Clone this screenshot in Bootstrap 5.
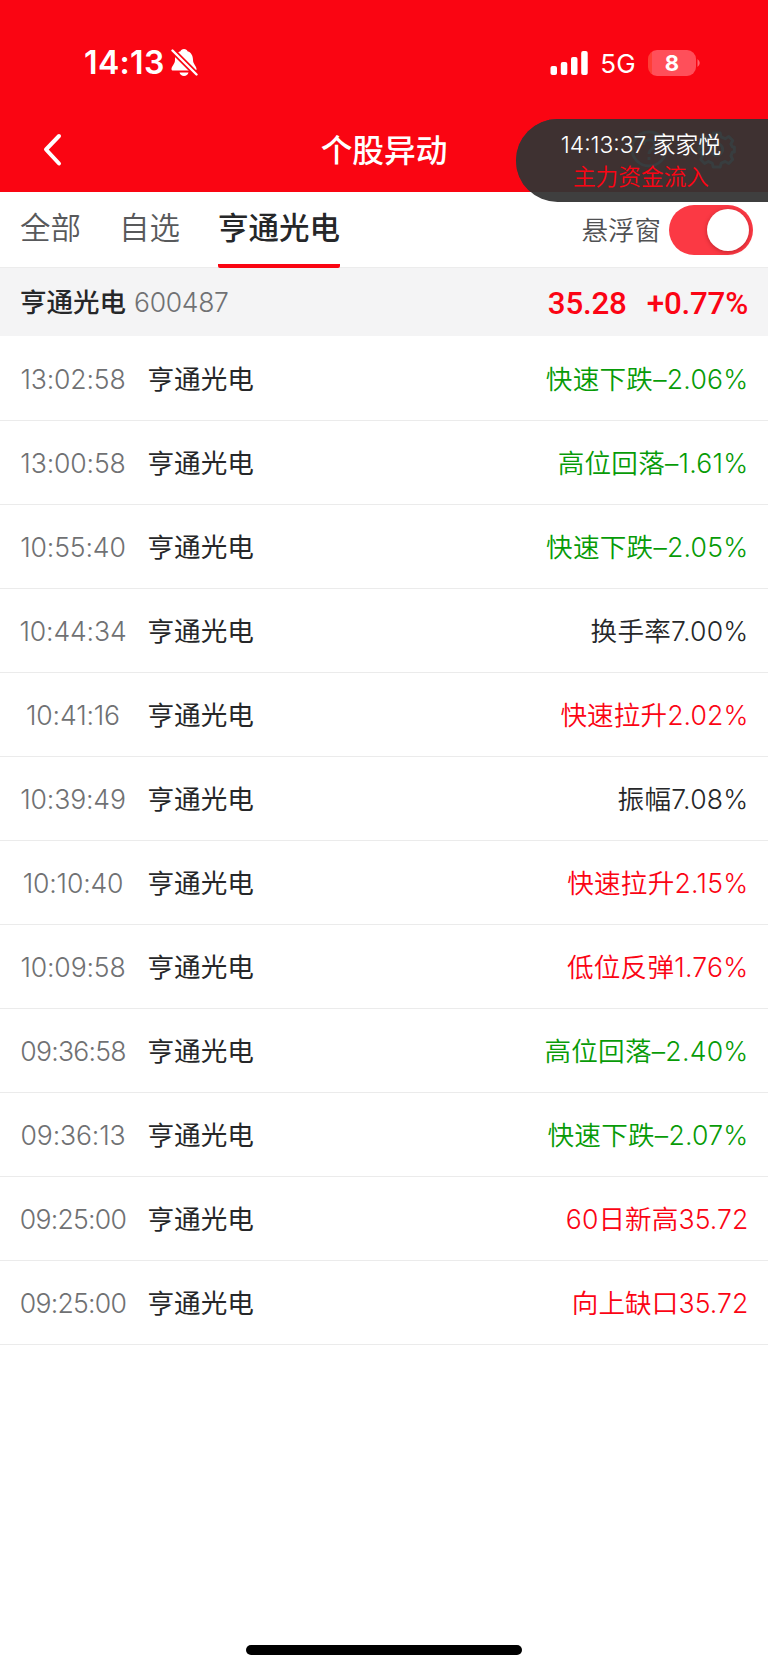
<!DOCTYPE html>
<html lang="zh-CN">
<head>
<meta charset="utf-8">
<meta name="viewport" content="width=device-width, initial-scale=1">
<title>个股异动</title>
<link rel="stylesheet" href="https://cdn.jsdelivr.net/npm/bootstrap@5.3.0/dist/css/bootstrap.min.css">
<style>
:root{--brand:#fa0512;--up:#fb0414;--down:#079b07;--ink:#262729;--dim:#707173}
body{font-family:Inter,"Noto Sans CJK SC",sans-serif;color:var(--ink);background:#fff;min-height:1670px;line-height:1}
svg{display:block}
.app-head{background:var(--brand);height:192px}
.status{height:125px;padding:0 68px 0 84px}
.clock{font-size:32px;font-weight:600;letter-spacing:.35px}
.bell{margin-left:6px}
.net{font-size:26px;margin-left:12px;letter-spacing:.3px;padding-top:2px}
.battery{width:48px;height:26px;margin-left:12px;border-radius:9px;background:linear-gradient(90deg,#ff3e36 4px,#ff4f5a 4px);font-size:22px;font-weight:700}
.title{font-size:31.7px;font-weight:500}
.bar{height:51px}
.back{left:39px;top:6px}
.float-tip{left:516px;right:0;top:119px;height:83px;border-radius:44px 0 0 44px;background:#3f3f3f;overflow:hidden;z-index:5}
.float-tip::before{content:"";position:absolute;inset:0 0 10px 0;background:#3e3131}
.tip-icons{left:111px;top:10px}
.tip-text{width:250px}
.tip-text .l1{font-size:22.8px;font-weight:350;color:#fff;padding-top:14px;line-height:24px}
.tip-text .l2{font-size:22.7px;font-weight:350;color:var(--up);line-height:24px;margin-top:8px}
.tabs-row{height:76px;border-bottom:1px solid #ececec;padding:0 15px 0 20px}
.tab-item{font-size:30.5px;height:76px;line-height:72px;color:#58595b;font-weight:350}
.t2{margin-left:38px}
.tab-item.on{margin-left:38px;color:var(--ink);font-weight:500;border-bottom:4px solid var(--brand);border-radius:2px;height:76px}
.sw-label{font-size:26.5px;font-weight:350;color:#505153;margin-right:8px;padding-top:2px}
.form-switch .form-check-input.sw{width:84px;height:50px;margin:0;border:0;border-radius:25px;background-color:#fb3944;background-image:none;position:relative;box-shadow:none;float:none}
.sw::after{content:"";position:absolute;width:42px;height:42px;border-radius:50%;background:#fff;right:4px;top:4px;box-shadow:0 1px 4px rgba(80,0,0,.35)}
.stock{height:68px;background:#f4f4f5;padding:1px 20px 0}
.stock .nm{font-size:26.5px;font-weight:500}
.stock .code{font-size:26.5px;font-weight:350;color:var(--dim);letter-spacing:-.3px}
.price{font-family:Roboto,sans-serif;font-weight:500;font-size:31.3px;letter-spacing:-.2px;color:var(--up);padding-top:3px}
.chg{margin-left:20px}
.ev{height:84px;border-bottom:1px solid #ebebeb;padding:2px 20px 0;color:var(--ink);font-size:26.6px}
.ev:first-child{height:85px;padding-top:3px}
.tm{width:106px;color:var(--dim);font-weight:350;white-space:nowrap;letter-spacing:-.15px}
.tm.wide{letter-spacing:-.75px}
.ev-name{margin-left:21.500px}
.val{font-weight:350;letter-spacing:.1px;margin-right:-.5px}
.pct{letter-spacing:.25px}
.up{color:var(--up)}.down{color:var(--down)}
.home-bar{left:246px;bottom:15px;width:276px;height:10px;border-radius:5px;background:#000}
</style>
</head>
<body class="position-relative">
<header class="app-head text-white position-relative">
  <div class="status d-flex align-items-center">
    <span class="clock">14:13</span>
    <svg class="bell" width="27" height="29" viewBox="0 0 27 29"><path d="M13 1c-2 0-3 1-3.500 2.200C5.500 4.500 4 8 4 12c0 4-3.500 6-3.500 9 0 1 .6 1.500 1.500 1.500h22c1 0 1.500-.5 1.500-1.500 0-3-3.500-5-3.500-9 0-4-1.500-7.500-5.500-8.800C16 2 15 1 13 1zM8.500 24.500c.5 2 2.300 3.500 4.500 3.500s4-1.500 4.500-3.500z" fill="#fff"/><path d="M1.500 2.500l24 24" stroke="#fa0512" stroke-width="5.600"/><path d="M1.500 2.500l24 24" stroke="#fff" stroke-width="2.400" stroke-linecap="round"/></svg>
    <svg class="ms-auto" width="38" height="24" viewBox="0 0 38 24" fill="#fff"><rect x="0.500" y="15" width="6.500" height="9" rx="2"/><rect x="10.800" y="11" width="6.500" height="13" rx="2"/><rect x="21" y="6" width="6.500" height="18" rx="2"/><rect x="31.200" y="0" width="6.500" height="24" rx="2"/></svg>
    <span class="net">5G</span>
    <span class="battery d-flex align-items-center justify-content-center">8</span>
    <svg width="4" height="8" viewBox="0 0 4 8"><path d="M1.500 0v8Q6 4 1.500 0z" fill="#ff6670"/></svg>
  </div>
  <div class="bar d-flex justify-content-center align-items-center position-relative">
    <svg class="back position-absolute" width="24" height="36" viewBox="0 0 24 36" fill="none" stroke="#fff" stroke-width="4" stroke-linecap="round" stroke-linejoin="round"><path d="M20 5L7 18.500l13 14"/></svg>
    <span class="title">个股异动</span>
  </div>
  <div class="float-tip position-absolute">
    <svg class="tip-icons position-absolute" width="110" height="42" viewBox="0 0 110 42" fill="none" stroke="#383d3f" stroke-width="3"><circle cx="22" cy="20" r="17"/><path d="M16.500 16c0-7 11-7 11 0 0 4-5.500 4-5.500 9M22 28v3"/><g transform="translate(89.700 20.500)"><path stroke-linejoin="round" d="M-3.500-16.500h7l1 4 4 1.700 3.600-2.200 3.900 4-1.800 3.500 1.500 3h2v5h-2l-1.500 4 1.800 3.500-3.900 4-3.600-2-4 1.600-1 4h-7l-1-4-4-1.600-3.600 2-3.900-4 1.800-3.500-1.500-4h-2v-5h2l1.500-3-1.800-3.500 3.900-4 3.600 2.200 4-1.700z"/><circle r="6"/></g></svg>
    <div class="tip-text position-relative text-center">
      <div class="l1">14:13:37 家家悦</div>
      <div class="l2">主力资金流入</div>
    </div>
  </div>
</header>
<nav class="tabs-row d-flex align-items-center">
  <span class="tab-item">全部</span><span class="tab-item t2">自选</span><span class="tab-item on">亨通光电</span>
  <span class="sw-label ms-auto">悬浮窗</span>
  <span class="form-check form-switch p-0 m-0 d-flex"><input class="form-check-input sw" type="checkbox" role="switch" checked aria-label="悬浮窗"></span>
</nav>
<section class="stock d-flex align-items-center">
  <span class="nm">亨通光电</span><span class="code ms-2">600487</span>
  <span class="price ms-auto">35.28</span><span class="price chg">+0.77%</span>
</section>
<main class="d-flex flex-column">
  <div class="ev d-flex align-items-center"><span class="tm d-flex justify-content-center">13:02:58</span><span class="ev-name">亨通光电</span><span class="val pct ms-auto down">快速下跌–2.06%</span></div>
  <div class="ev d-flex align-items-center"><span class="tm d-flex justify-content-center">13:00:58</span><span class="ev-name">亨通光电</span><span class="val pct ms-auto down">高位回落–1.61%</span></div>
  <div class="ev d-flex align-items-center"><span class="tm d-flex justify-content-center">10:55:40</span><span class="ev-name">亨通光电</span><span class="val pct ms-auto down">快速下跌–2.05%</span></div>
  <div class="ev d-flex align-items-center"><span class="tm d-flex justify-content-center">10:44:34</span><span class="ev-name">亨通光电</span><span class="val pct ms-auto">换手率7.00%</span></div>
  <div class="ev d-flex align-items-center"><span class="tm d-flex justify-content-center">10:41:16</span><span class="ev-name">亨通光电</span><span class="val ms-auto up">快速拉升2.02%</span></div>
  <div class="ev d-flex align-items-center"><span class="tm d-flex justify-content-center">10:39:49</span><span class="ev-name">亨通光电</span><span class="val pct ms-auto">振幅7.08%</span></div>
  <div class="ev d-flex align-items-center"><span class="tm d-flex justify-content-center">10:10:40</span><span class="ev-name">亨通光电</span><span class="val pct ms-auto up">快速拉升2.15%</span></div>
  <div class="ev d-flex align-items-center"><span class="tm d-flex justify-content-center">10:09:58</span><span class="ev-name">亨通光电</span><span class="val pct ms-auto up">低位反弹1.76%</span></div>
  <div class="ev d-flex align-items-center"><span class="tm wide d-flex justify-content-center">09:36:58</span><span class="ev-name">亨通光电</span><span class="val pct ms-auto down">高位回落–2.40%</span></div>
  <div class="ev d-flex align-items-center"><span class="tm d-flex justify-content-center">09:36:13</span><span class="ev-name">亨通光电</span><span class="val pct ms-auto down">快速下跌–2.07%</span></div>
  <div class="ev d-flex align-items-center"><span class="tm wide d-flex justify-content-center">09:25:00</span><span class="ev-name">亨通光电</span><span class="val ms-auto up">60日新高35.72</span></div>
  <div class="ev d-flex align-items-center"><span class="tm wide d-flex justify-content-center">09:25:00</span><span class="ev-name">亨通光电</span><span class="val ms-auto up">向上缺口35.72</span></div>
</main>
<div class="home-bar position-absolute"></div>
<script src="https://cdn.jsdelivr.net/npm/bootstrap@5.3.0/dist/js/bootstrap.bundle.min.js"></script>
</body>
</html>
